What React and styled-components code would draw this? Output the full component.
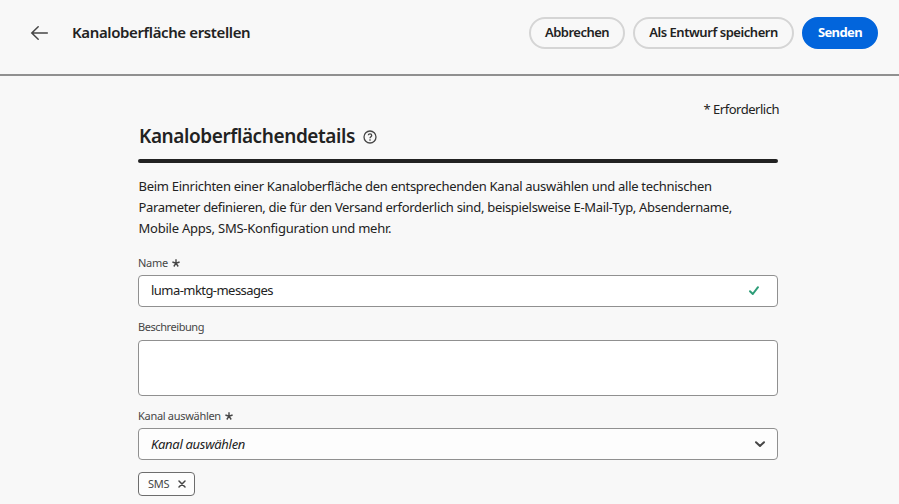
import React from "react";
import styled, { createGlobalStyle } from "styled-components";

const Global = createGlobalStyle`
  * { box-sizing: border-box; }
  html, body { margin: 0; height: 504px; overflow: hidden; background: #f8f8f8; }
  body { font-family: "Noto Sans", "Open Sans", sans-serif; color: #222; }
  button { font-family: inherit; margin: 0; }
`;

const Page = styled.div`
  width: 899px;
  height: 504px;
  overflow: hidden;
`;
const Header = styled.header`
  display: flex;
  align-items: center;
  height: 76px;
  padding: 0 21px 8px 30px;
  border-bottom: 2px solid #909090;
`;
const BackIcon = styled.svg`
  width: 20px;
  height: 16px;
  flex: none;
`;
const Text = styled.span`
  white-space: pre;
  letter-spacing: ${(p) => p.$ls || 0}px;
`;
const Title = styled.h1`
  margin: 0 0 0 22px;
  padding-bottom: 2px;
  font-size: 15px;
  line-height: 20px;
  font-weight: 600;
  flex: 1;
`;
const Actions = styled.div`
  display: flex;
  gap: 8px;
`;
const Button = styled.button`
  width: ${(p) => p.$w}px;
  height: 32px;
  padding: 0 0 2px;
  border-radius: 16px;
  border: 2px solid ${(p) => (p.$primary ? "#0265dc" : "#d5d5d5")};
  background: ${(p) => (p.$primary ? "#0265dc" : "transparent")};
  color: ${(p) => (p.$primary ? "#fff" : "#222")};
  font-size: 13px;
  line-height: 20px;
  font-weight: ${(p) => (p.$primary ? 700 : 600)};
`;
const Main = styled.main`
  width: 640px;
  margin-left: 138px;
  padding-top: 23px;
`;
const Required = styled.div`
  height: 20px;
  font-size: 13px;
  line-height: 20px;
  text-align: right;
  margin-right: -1px;
`;
const SectionHead = styled.div`
  display: flex;
  align-items: center;
  height: 40px;
  padding: 0 0 6px 1px;
  gap: 8px;
`;
const HelpIcon = styled.svg`
  width: 14px;
  height: 14px;
  margin-top: 1px;
`;
const SectionTitle = styled.h2`
  margin: 0;
  font-size: 19px;
  line-height: 26px;
  font-weight: 600;
`;
const Rule = styled.div`
  height: 4px;
  border-radius: 2px;
  background: #222;
`;
const Intro = styled.p`
  margin: 13px 0 16px;
  padding-left: 0.5px;
  font-size: 13px;
  line-height: 21px;
  display: flex;
  flex-direction: column;
`;
const Label = styled.label`
  display: flex;
  align-items: center;
  gap: 4px;
  height: 16px;
  font-size: 11px;
  line-height: 16px;
  color: #464646;
`;
const Field = styled.div`
  display: flex;
  align-items: center;
  justify-content: space-between;
  height: ${(p) => p.$h}px;
  margin: ${(p) => p.$m};
  padding: 0 11px 1px 12px;
  border: 1px solid #909090;
  border-radius: 4px;
  background: ${(p) => p.$bg || "#fff"};
  font-size: 13px;
  line-height: 20px;
  font-style: ${(p) => (p.$italic ? "italic" : "normal")};
`;
const Value = styled(Text)`
  padding-bottom: 2px;
`;
const Tag = styled.div`
  display: flex;
  align-items: center;
  justify-content: space-between;
  width: 57px;
  height: 24px;
  padding: 0 8px 0 9px;
  border: 1px solid #6d6d6d;
  border-radius: 4px;
  background: #fdfdfd;
  color: #464646;
  font-size: 11px;
  line-height: 16px;
`;

const Asterisk = () => (
  <svg width="8" height="8" viewBox="0 0 8 8" fill="none" stroke="#464646" strokeWidth="1.4">
    <path d="M4 .3V4M.4 3 4 4.2 7.6 3M1.8 7.5 4 4.2 6.2 7.5" />
  </svg>
);

export default function App() {
  return (
    <Page>
      <Global />
      <Header>
        <BackIcon viewBox="0 0 20 16" fill="none" stroke="#464646" strokeWidth="1.5" strokeLinecap="round">
          <path d="M1.8 8H17.3M8.2 1.8 1.8 8l6.4 6.2" />
        </BackIcon>
        <Title><Text $ls={-0.38}>Kanaloberfläche erstellen</Text></Title>
        <Actions>
          <Button $w={96}><Text $ls={-0.5}>Abbrechen</Text></Button>
          <Button $w={161}><Text $ls={-0.45}>Als Entwurf speichern</Text></Button>
          <Button $w={76} $primary><Text $ls={-0.6}>Senden</Text></Button>
        </Actions>
      </Header>
      <Main>
        <Required><Text $ls={-0.48}>* Erforderlich</Text></Required>
        <SectionHead>
          <SectionTitle><Text $ls={-0.41}>Kanaloberflächendetails</Text></SectionTitle>
          <HelpIcon viewBox="0 0 14 14" fill="none" stroke="#464646" strokeWidth="1.3">
            <circle cx="7" cy="7" r="6" />
            <path d="M5.3 5.3C5.4 3.4 8.7 3.4 8.7 5.4 8.7 6.7 7 6.7 7 8.3M7 9.3v1.4" />
          </HelpIcon>
        </SectionHead>
        <Rule />
        <Intro>
          <Text $ls={-0.28}>Beim Einrichten einer Kanaloberfläche den entsprechenden Kanal auswählen und alle technischen</Text>
          <Text $ls={-0.315}>Parameter definieren, die für den Versand erforderlich sind, beispielsweise E-Mail-Typ, Absendername,</Text>
          <Text $ls={-0.23}>Mobile Apps, SMS-Konfiguration und mehr.</Text>
        </Intro>
        <Label><Text $ls={-0.3}>Name</Text><Asterisk /></Label>
        <Field $h={32} $m="4px 0 12px">
          <Value $ls={-0.55}>luma-mktg-messages</Value>
          <svg width="22" height="12" viewBox="0 0 22 12" fill="none" stroke="#2d9d78" strokeWidth="2" strokeLinecap="round" strokeLinejoin="round">
            <path d="M6 6.3 8.8 9 14 2.2" />
          </svg>
        </Field>
        <Label><Text $ls={-0.43}>Beschreibung</Text></Label>
        <Field $h={56} $m="5px 0 12px" />
        <Label><Text $ls={-0.3}>Kanal auswählen</Text><Asterisk /></Label>
        <Field $h={32} $m="4px 0 12px" $bg="#fdfdfd" $italic>
          <Text $ls={-0.3}>Kanal auswählen</Text>
          <svg width="12" height="8" viewBox="0 0 12 8" fill="none" stroke="#464646" strokeWidth="2" strokeLinecap="round" strokeLinejoin="round">
            <path d="M2 2.2 6 6 10 2.2" />
          </svg>
        </Field>
        <Tag>
          <Text $ls={-0.2}>SMS</Text>
          <svg width="8" height="8" viewBox="0 0 8 8" fill="none" stroke="#464646" strokeWidth="1.5" strokeLinecap="round">
            <path d="M1 1 7 7M7 1 1 7" />
          </svg>
        </Tag>
      </Main>
    </Page>
  );
}
